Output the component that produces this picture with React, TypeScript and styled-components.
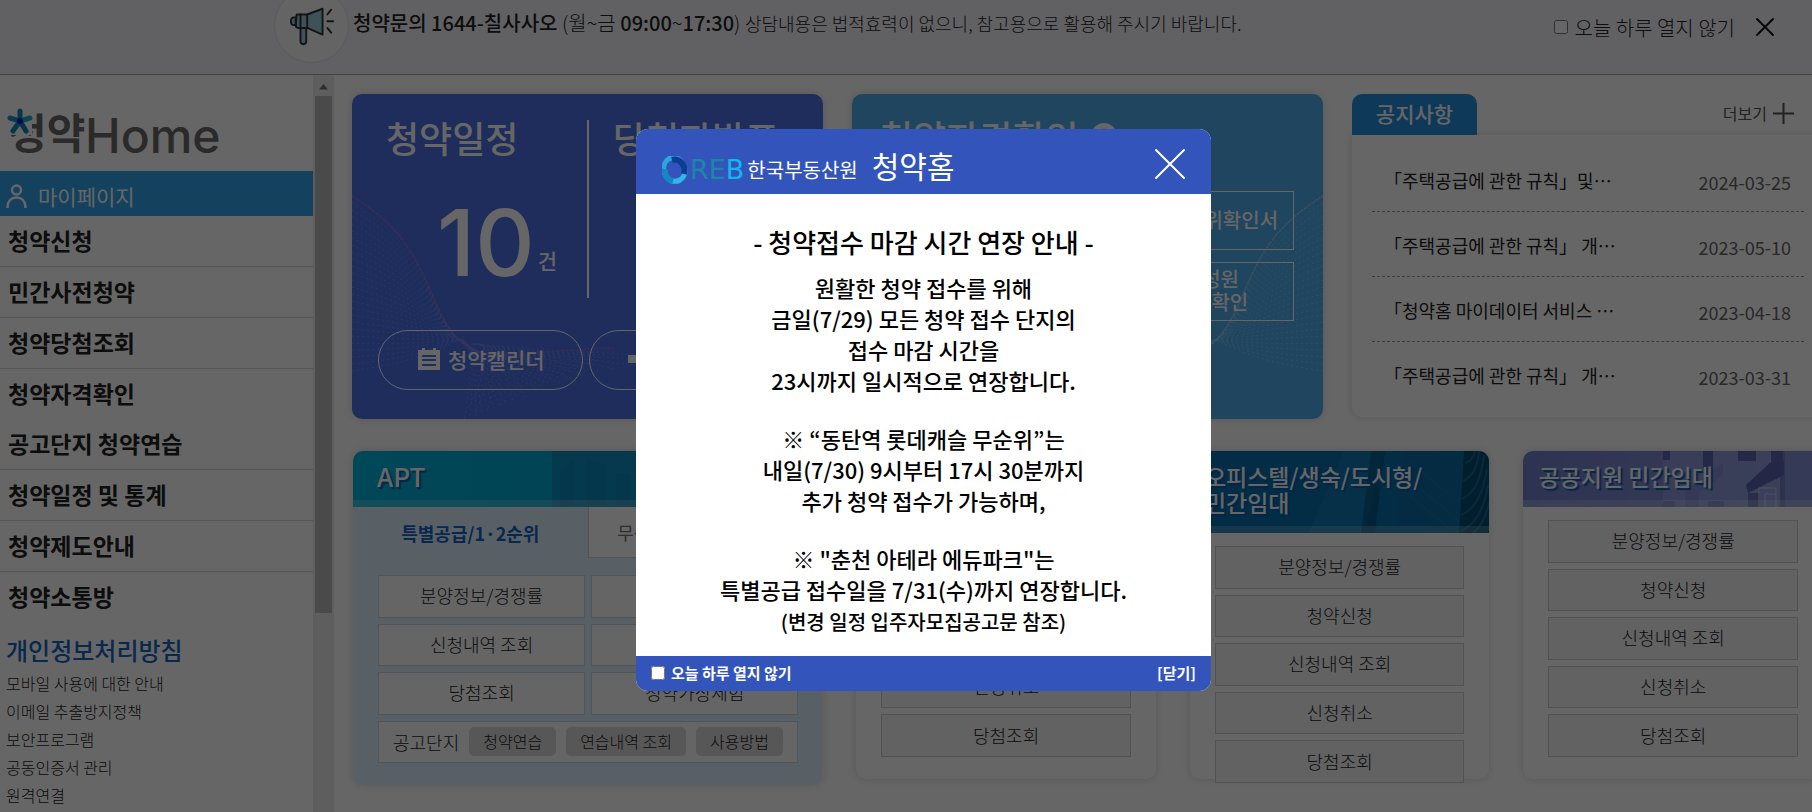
import React from "react";
import styled, { createGlobalStyle } from "styled-components";

const Global = createGlobalStyle`
  *, *::before, *::after { box-sizing: border-box; }
  body {
    margin: 0;
    background: #fff;
    color: #222;
    font-family: "Noto Sans CJK KR", "Noto Sans", sans-serif;
    font-size: 18px;
    overflow-x: hidden;
  }
  h1, h2, h3, p, ul { margin: 0; padding: 0; font-weight: inherit; font-size: inherit; }
  ul { list-style: none; }
  a { color: inherit; text-decoration: none; }
  button { font: inherit; color: inherit; background: none; border: 0; padding: 0; cursor: pointer; }
  input[type="checkbox"] { width: 14px; height: 14px; margin: 0; }
`;

const Page = styled.div`
  display: flex;
  flex-direction: column;
  min-height: 100vh;
`;

/* ---------- top notice ---------- */

const TopBar = styled.header`
  display: flex;
  align-items: flex-start;
  height: 75px;
  padding: 0 37px 0 274px;
  background: #f3f3f7;
  border-bottom: 1px solid #a8a8a8;
  overflow: hidden;
`;

const HornCircle = styled.span`
  display: flex;
  align-items: center;
  justify-content: center;
  flex: none;
  width: 75px;
  height: 75px;
  margin-top: -12px;
  border: 1px solid #e2e2e2;
  border-radius: 50%;
  background: #fafafa;
`;

const TopText = styled.p`
  flex: 1;
  margin-left: 4px;
  font-size: 20px;
  line-height: 46px;
  font-weight: 500;
  white-space: nowrap;
`;

const Light = styled.span<{ $size?: number }>`
  font-weight: 300;
  font-size: ${(p) => p.$size ?? 20}px;
`;

const TopClose = styled.div`
  display: flex;
  align-items: center;
  height: 54px;
  font-size: 20px;
  font-weight: 300;

  label { display: flex; align-items: center; gap: 7px; }
  button { display: flex; margin-left: 20px; }
`;

/* ---------- side menu ---------- */

const Columns = styled.div`
  display: flex;
  flex: 1;
`;

const Sidebar = styled.aside`
  display: flex;
  flex: none;
  width: 334px;
`;

const SideContent = styled.nav`
  flex: 1;
`;

const LogoLink = styled.a`
  display: block;
  height: 96px;
  padding: 12px 0 0 4px;

  svg { display: block; }
`;

const MyPage = styled.a`
  display: flex;
  align-items: center;
  gap: 11px;
  height: 45px;
  padding: 4px 0 0 6px;
  background: #32a4ec;
  color: #fff;
  font-size: 21px;
  line-height: 30px;
`;

const MenuItem = styled.li<{ $line: boolean }>`
  height: ${(p) => (p.$line ? 51 : 50)}px;
  padding-left: 8px;
  border-bottom: ${(p) => (p.$line ? "1px solid #d4d4d4" : "0")};
  font-size: 23px;
  font-weight: 700;
  line-height: 48px;
`;

const Privacy = styled.a`
  display: block;
  padding: 9px 0 0 6px;
  color: #1567c4;
  font-size: 24px;
  font-weight: 500;
  line-height: 38px;
`;

const SmallLinks = styled.ul`
  padding-left: 6px;
  font-size: 16px;
  line-height: 28px;
  font-weight: 300;
`;

const ScrollTrack = styled.div`
  width: 21px;
  padding: 8px 2px 0;
  background: #ececec;
`;

const ScrollThumb = styled.div`
  height: 517px;
  margin-top: 6px;
  background: #bababa;
`;

/* ---------- main ---------- */

const Main = styled.main`
  flex: 1;
  min-width: 0;
  padding: 19px 0 0 18px;
  overflow: hidden;
`;

const TopGrid = styled.div`
  display: grid;
  grid-template-columns: repeat(3, minmax(0, 1fr));
  gap: 29px;
  margin-right: -11px;
`;

const Banner = styled.section<{ $bg: string }>`
  position: relative;
  height: 325px;
  border-radius: 10px;
  background: ${(p) => p.$bg};
  color: #fff;
  box-shadow: 0 0 8px rgba(0, 0, 0, 0.15);
  overflow: hidden;
`;

const Waves = styled.svg<{ $flip?: boolean }>`
  position: absolute;
  top: 0;
  ${(p) => (p.$flip ? "right: 0; transform: scaleX(-1);" : "left: 0;")}
`;

const BannerBody = styled.div`
  position: relative;
  padding: 18px 26px 0;
`;

const Stats = styled.div`
  display: grid;
  grid-template-columns: 1fr 1fr;
  margin: 8px -3px 0 0;
`;

const Stat = styled.div<{ $divided?: boolean }>`
  height: 178px;
  padding-left: ${(p) => (p.$divided ? 8 : 24)}px;
  border-right: ${(p) => (p.$divided ? "2px solid #fff" : "0")};
`;

const BannerTitle = styled.h2`
  display: flex;
  align-items: center;
  gap: 12px;
  font-size: 36px;
  font-weight: 500;
  line-height: 34px;
  white-space: nowrap;
`;

const QualifyHead = styled.div`
  padding: 7px 0 0 2px;
`;

const StatValue = styled.p`
  display: flex;
  align-items: flex-end;
  justify-content: flex-end;
  gap: 3px;
  padding-right: 30px;
  margin-top: 33px;
  font-size: 21px;

  strong {
    font-family: Inter, sans-serif;
    font-size: 92px;
    font-weight: 500;
    line-height: 112px;
  }
  span { padding-bottom: 24px; font-weight: 500; line-height: 30px; }
`;

const Pills = styled.div`
  display: grid;
  grid-template-columns: 1fr 1fr;
  gap: 6px;
  margin: 32px 4px 0 0;
`;

const PillButton = styled.button`
  display: flex;
  align-items: center;
  justify-content: center;
  gap: 8px;
  height: 60px;
  padding: 0 0 2px 2px;
  border: 1px solid #fff;
  border-radius: 30px;
  font-size: 21px;
  font-weight: 500;
`;

const BoxGrid = styled.div`
  display: grid;
  grid-template-columns: 1fr 1fr;
  gap: 12px 9px;
  margin: 38px 3px 0;
`;

const BoxButton = styled.button`
  height: 59px;
  padding-bottom: 3px;
  border: 1px solid #fff;
  font-size: 20px;
  font-weight: 500;
  line-height: 23px;
`;

/* ---------- notices ---------- */

const NoticeHead = styled.div`
  display: flex;
  justify-content: space-between;
  height: 41px;
  padding-right: 29px;
`;

const NoticeTab = styled.h2`
  width: 125px;
  border-radius: 10px 10px 0 0;
  background: #2390dc;
  color: #fff;
  font-size: 21px;
  font-weight: 500;
  line-height: 38px;
  text-align: center;
`;

const More = styled.a`
  display: flex;
  align-items: center;
  gap: 6px;
  height: 38px;
  font-size: 16px;
  color: #555;
`;

const NoticeBox = styled.ul`
  height: 282px;
  padding: 12px 19px 0 20px;
  border-radius: 0 0 10px 10px;
  box-shadow: 0 0 8px rgba(0, 0, 0, 0.15);
`;

const NoticeRow = styled.li`
  display: flex;
  align-items: center;
  justify-content: space-between;
  height: 65px;
  padding: 1px 13px 0 12px;
  border-bottom: 1px dashed #999;
  font-size: 18px;

  &:last-child { border-bottom-color: transparent; }
  time { padding-top: 4px; color: #666; }
`;

/* ---------- product cards ---------- */

const CardGrid = styled.div`
  display: grid;
  grid-template-columns: 470fr 300fr 300fr 300fr;
  gap: 34px;
  align-items: start;
  margin: 32px -11px 0 1px;
`;

const Card = styled.section<{ $tall?: boolean }>`
  height: ${(p) => (p.$tall ? 334 : 328)}px;
  border-radius: 10px;
  background: ${(p) => (p.$tall ? "#dff0fd" : "#fff")};
  box-shadow: 0 0 8px rgba(0, 0, 0, 0.15);
`;

const CardHead = styled.div<{ $bg: string; $large?: boolean }>`
  position: relative;
  padding: 12px ${(p) => (p.$large ? 24 : 15)}px 18px;
  border-radius: 10px 10px 0 0;
  background: ${(p) => p.$bg};
  color: #fff;
  font-size: ${(p) => (p.$large ? 26 : 23)}px;
  font-weight: 500;
  line-height: 26px;
  text-shadow: 2px 2px 1px #0a5cae;
  overflow: hidden;

  &::after {
    content: "";
    position: absolute;
    left: 0;
    right: 0;
    bottom: 0;
    height: 7px;
    background: rgba(255, 255, 255, 0.2);
  }
  h2 { position: relative; white-space: pre-line; }
`;

const HeadArt = styled.svg`
  position: absolute;
  right: 0;
  top: 0;
  height: 100%;
`;

const Tabs = styled.div`
  display: grid;
  grid-template-columns: 1fr 1fr;
  height: 50px;
`;

const Tab = styled.button<{ $on?: boolean }>`
  background: ${(p) => (p.$on ? "transparent" : "#fff")};
  color: ${(p) => (p.$on ? "#1863bd" : "#777")};
  font-size: 18px;
  font-weight: ${(p) => (p.$on ? 700 : 400)};
  line-height: 50px;
  border-left: ${(p) => (p.$on ? "0" : "1px solid #c5d5e2")};
  border-bottom: ${(p) => (p.$on ? "0" : "1px solid #c5d5e2")};
`;

const AptGrid = styled.div`
  display: grid;
  grid-template-columns: 1fr 1fr;
  grid-template-rows: repeat(4, 1fr);
  gap: 6px;
  height: 188px;
  margin: 18px 24px 0 25px;
`;

const ListGrid = styled.div`
  display: grid;
  grid-template-rows: repeat(5, 1fr);
  gap: 6px;
  height: 237px;
  margin: 13px 25px 0;
`;

const Item = styled.button<{ $plain?: boolean }>`
  padding-bottom: 2px;
  border: 1px solid ${(p) => (p.$plain ? "#bdd6e6" : "#cdcdd2")};
  background: ${(p) => (p.$plain ? "#fcfcfc" : "#f4f4f7")};
  font-size: 18px;
  font-weight: 300;
`;

const Practice = styled.div`
  display: flex;
  align-items: center;
  grid-column: 1 / -1;
  gap: 10px;
  padding-left: 14px;
  border: 1px solid #bdd6e6;
  background: #fcfcfc;
  font-size: 18px;
  font-weight: 300;
  white-space: nowrap;
`;

const Chip = styled.button`
  height: 29px;
  padding: 0 14px;
  border-radius: 5px;
  background: #d9d9da;
  font-size: 16px;
  line-height: 29px;
  font-weight: 300;
`;

/* ---------- popup ---------- */

const Shade = styled.div`
  position: fixed;
  inset: 0;
  display: flex;
  align-items: flex-start;
  justify-content: center;
  padding: 129px 0 0 35px;
  background: rgba(0, 0, 0, 0.6);
`;

const Dialog = styled.div`
  width: 575px;
  border-radius: 12px;
  background: #fff;
  color: #000;
  overflow: hidden;
`;

const DialogHead = styled.div`
  display: flex;
  align-items: center;
  height: 65px;
  padding: 16px 25px 0 26px;
  background: #3355bb;
  color: #fff;
`;

const Reb = styled.span`
  margin: 0 3px 0 2px;
  font-family: "DejaVu Sans", sans-serif;
  font-size: 27px;
  line-height: 30px;
  color: #1c86a8;

  b { color: #10b8ee; font-weight: 400; }
`;

const Agency = styled.span`
  font-size: 20px;
  line-height: 30px;
`;

const DialogTitle = styled.h1`
  flex: 1;
  margin-left: 14px;
  font-size: 30px;
  line-height: 30px;
  padding-bottom: 9px;
`;

const CloseButton = styled.button`
  display: flex;
  margin-top: -12px;
`;

const DialogBody = styled.div`
  height: 462px;
  padding-top: 28px;
  text-align: center;
  font-size: 22px;
  font-weight: 500;
  line-height: 31px;

  h2 { margin-bottom: 10px; font-size: 26px; line-height: 40px; }
  p + p { margin-top: 27px; }
  small { display: block; font-size: 20px; line-height: 34px; }
`;

const DialogFoot = styled.div`
  display: flex;
  align-items: center;
  justify-content: space-between;
  height: 35px;
  padding: 0 15px 2px;
  background: #3355bb;
  color: #fff;
  font-size: 15px;
  font-weight: 700;

  label { display: flex; align-items: center; gap: 6px; }
`;

/* ---------- data ---------- */

const MENU = [
  "청약신청",
  "민간사전청약",
  "청약당첨조회",
  "청약자격확인",
  "공고단지 청약연습",
  "청약일정 및 통계",
  "청약제도안내",
  "청약소통방",
];
const NO_LINE = ["청약자격확인", "청약소통방"];
const LINKS = ["모바일 사용에 대한 안내", "이메일 추출방지정책", "보안프로그램", "공동인증서 관리", "원격연결"];
const NOTICES = [
  ["「주택공급에 관한 규칙」및…", "2024-03-25"],
  ["「주택공급에 관한 규칙」 개…", "2023-05-10"],
  ["「청약홈 마이데이터 서비스 …", "2023-04-18"],
  ["「주택공급에 관한 규칙」 개…", "2023-03-31"],
];
const SERVICES = ["분양정보/경쟁률", "청약신청", "신청내역 조회", "신청취소", "당첨조회"];
const APT_ITEMS = ["분양정보/경쟁률", "청약신청", "신청내역 조회", "신청취소", "당첨조회", "청약가상체험"];

/* ---------- drawings ---------- */

function WaveLines({ color, accent, flip }: { color: string; accent: string; flip?: boolean }) {
  const lines = Array.from({ length: 26 }, (_, i) => {
    const t = i / 25;
    const sy = 102 + t * 175;
    return `M0 ${sy} C ${70 - t * 20} ${145 + t * 125} ${70 + t * 10} ${190 + t * 70} ${96 + t * 6} ${232 + t * 16} S ${150 - t * 30} ${258 + t * 20} ${262 - t * 150} ${258 + t * 70}`;
  });
  const fan = Array.from({ length: 16 }, (_, i) => {
    const t = i / 15;
    return `M${120 + t * 10} 250 Q ${200 - t * 60} ${256 + t * 20} ${300 - t * 190} ${262 + t * 63}`;
  });
  return (
    <Waves $flip={flip} width="471" height="325" viewBox="0 0 471 325" fill="none" aria-hidden="true">
      <g stroke={color} strokeWidth="1" strokeDasharray="2 3" opacity="0.6">
        {lines.map((d, i) => <path key={i} d={d} />)}
        {fan.map((d, i) => <path key={i} d={d} />)}
      </g>
      <path d="M0 102 C70 145 70 190 96 232 S150 258 262 254" stroke={accent} strokeWidth="2" strokeDasharray="2 1" opacity="0.5" />
    </Waves>
  );
}

function HomeLogo() {
  return (
    <svg width="240" height="76" viewBox="0 0 240 76" role="img" aria-label="청약Home">
      <text x="4" y="62" fontFamily="Noto Sans CJK KR, sans-serif" fontSize="42" fontWeight="700" fill="#6a6a6a">청약</text>
      <text x="81" y="66" fontFamily="Inter, sans-serif" fontSize="48" fontWeight="500" fill="#6a6a6a">Home</text>
      <path d="M0 18H28V48H0z" fill="#fff" />
      <g strokeWidth="5" strokeLinecap="round">
        <path d="M16 34V24" stroke="#1a8ab5" />
        <path d="M16 34L6 31" stroke="#1f93c4" />
        <path d="M16 34L26 31" stroke="#12b4cf" />
        <path d="M16 34L9 44" stroke="#168ac0" />
        <path d="M16 34L22 44" stroke="#1a7fb5" />
      </g>
      <circle cx="16" cy="34" r="3" fill="#0a1fd0" />
    </svg>
  );
}

function Horn() {
  return (
    <svg width="46" height="46" viewBox="0 0 48 48" fill="#9dcbde" stroke="#333" strokeWidth="2" strokeLinejoin="round" strokeLinecap="round" aria-hidden="true">
      <path d="M12 26h6v14q0 3-3 3t-3-3z" />
      <path d="M8 12h11l16-6v27l-16-7H10q-3 0-3-3z" />
      <path d="M19 12v14M12 12v14" />
      <path d="M7 15H5q-3 0-3 4t3 4h2z" />
      <path d="M40 12l4-5M40 19h6M40 26l4 5" fill="none" />
    </svg>
  );
}

function Cross({ size, color, width }: { size: number; color: string; width: number }) {
  return (
    <svg width={size} height={size} viewBox={`0 0 ${size} ${size}`} stroke={color} strokeWidth={width} strokeLinecap="round" aria-hidden="true">
      <path d={`M2 2L${size - 2} ${size - 2}M${size - 2} 2L2 ${size - 2}`} />
    </svg>
  );
}

function CalendarIcon() {
  return (
    <svg width="22" height="22" viewBox="0 0 22 22" aria-hidden="true">
      <path fill="#fff" fillRule="evenodd" d="M0 2h4V0h3v2h8V0h3v2h4v20H0zM4 7v2h14V7zm0 4v2h14v-2zm0 5v2h14v-2z" />
    </svg>
  );
}

function ServiceCard({ title, bg, art }: { title: string; bg: string; art?: React.ReactNode }) {
  return (
    <Card>
      <CardHead $bg={bg}>
        {art}
        <h2>{title}</h2>
      </CardHead>
      <ListGrid>
        {SERVICES.map((s) => <Item key={s}>{s}</Item>)}
      </ListGrid>
    </Card>
  );
}

const towerArt = (
  <HeadArt width="180" viewBox="0 0 180 82" preserveAspectRatio="none" aria-hidden="true">
    <path d="M0 82L35 0h40L55 82z" fill="#1689c4" opacity=".35" />
    <path d="M62 0h14L66 82H52z" fill="#033b68" opacity=".4" />
    <path d="M95 0h58l-8 82H88z" fill="#0e6aa3" opacity=".5" />
    <path d="M90 20l60 50M88 35l56 45M100 10l50 42" stroke="#38a5d8" opacity=".2" />
    <path d="M155 0h25v82h-30z" fill="#033357" opacity=".6" />
    <path d="M156 12q8-2 10-12M154 30q14-6 16-30M153 48q18-8 22-44M152 64q20-8 26-46M151 80q22-8 28-46M164 82q12-10 16-30" fill="none" stroke="#4aa3cc" strokeWidth="2" opacity=".3" />
  </HeadArt>
);

const houseArt = (
  <HeadArt width="190" viewBox="0 0 190 56" preserveAspectRatio="none" aria-hidden="true">
    <path d="M30 56V0h122v56z" fill="#a9b4ea" opacity=".35" />
    <path d="M30 0h7v9h-7zM70 0h10v18H70zM105 0h18v10h-18zM138 0h12v10h-12z" fill="#5c66b4" />
    <path d="M52 56V40L90 12v12L66 42v14z" fill="#7f8bd0" opacity=".7" />
    <path d="M113 34l26-24h12v14l-36 18z" fill="#5e63b0" />
    <path d="M115 42h12v14h-12z" fill="#6a6fba" />
    <path d="M126 56V37h17v19M132 56V43h11" fill="none" stroke="#c2caf2" strokeWidth="1" />
    <path d="M30 50h12v6H30zM75 50h16v6H75z" fill="#6973bb" opacity=".7" />
    <path d="M147 0h5v56h-5z" fill="#5c66b4" opacity=".6" />
    <path d="M152 0h38v56h-38z" fill="#8591d8" />
  </HeadArt>
);

const cityArt = (
  <HeadArt width="270" viewBox="0 0 270 56" preserveAspectRatio="none" aria-hidden="true">
    <path d="M0 0h270v56H0z" fill="#1280b8" opacity=".6" />
    <path d="M8 56V18l14-8v46M34 56V8l20 6v42M64 56V22h14v34" fill="#0d6ca8" opacity=".15" />
  </HeadArt>
);

export default function App() {
  return (
    <>
      <Global />
      <Page>
        <TopBar>
          <HornCircle><Horn /></HornCircle>
          <TopText>
            청약문의 1644-칠사사오 <Light>(월~금</Light> 09:00<Light>~</Light>17:30<Light>)</Light>{" "}
            <Light $size={18}>상담내용은 법적효력이 없으니, 참고용으로 활용해 주시기 바랍니다.</Light>
          </TopText>
          <TopClose>
            <label><input type="checkbox" />오늘 하루 열지 않기</label>
            <button aria-label="닫기"><Cross size={20} color="#111" width={2} /></button>
          </TopClose>
        </TopBar>

        <Columns>
          <Sidebar>
            <SideContent>
              <LogoLink href="#"><HomeLogo /></LogoLink>
              <MyPage href="#">
                <svg width="21" height="24" viewBox="0 0 21 24" fill="none" stroke="#fff" strokeWidth="2.500" aria-hidden="true">
                  <circle cx="10.500" cy="6" r="4.500" />
                  <path d="M1.500 24c0-7 4-10.500 9-10.500s9 3.500 9 10.500" />
                </svg>
                마이페이지
              </MyPage>
              <ul>
                {MENU.map((m) => (
                  <MenuItem key={m} $line={!NO_LINE.includes(m)}><a href="#">{m}</a></MenuItem>
                ))}
              </ul>
              <Privacy href="#">개인정보처리방침</Privacy>
              <SmallLinks>
                {LINKS.map((l) => <li key={l}><a href="#">{l}</a></li>)}
              </SmallLinks>
            </SideContent>
            <ScrollTrack>
              <svg width="17" height="7" viewBox="0 0 17 7" display="block" aria-hidden="true">
                <path d="M4 6.500L8.500 1 13 6.500z" fill="#777" />
              </svg>
              <ScrollThumb />
            </ScrollTrack>
          </Sidebar>

          <Main>
            <TopGrid>
              <Banner $bg="#4b70e6">
                <WaveLines color="#7f9aff" accent="#c070c8" />
                <BannerBody>
                  <Stats>
                    <Stat $divided>
                      <BannerTitle>청약일정</BannerTitle>
                      <StatValue><strong>10</strong><span>건</span></StatValue>
                    </Stat>
                    <Stat>
                      <BannerTitle>당첨자발표</BannerTitle>
                    </Stat>
                  </Stats>
                  <Pills>
                    <PillButton><CalendarIcon />청약캘린더</PillButton>
                    <PillButton>
                      <svg width="22" height="22" viewBox="0 0 22 22" fill="#fff" aria-hidden="true"><path d="M0 7h8V0h7v7h7v8h-7v7H8v-7H0z" /></svg>
                      당첨자발표
                    </PillButton>
                  </Pills>
                </BannerBody>
              </Banner>

              <Banner $bg="#50acec">
                <WaveLines flip color="#93d0ff" accent="#b8dcf2" />
                <BannerBody>
                  <QualifyHead>
                    <BannerTitle>
                      청약자격확인
                      <svg width="26" height="26" viewBox="0 0 26 26" aria-hidden="true">
                        <circle cx="13" cy="13" r="13" fill="#fff" />
                        <path d="M9 11q0-4 4-4t4 4q0 2-4 4v2M13 18v3" fill="none" stroke="#50acec" strokeWidth="2.500" />
                      </svg>
                    </BannerTitle>
                  </QualifyHead>
                  <BoxGrid>
                    <BoxButton>청약자격확인</BoxButton>
                    <BoxButton>청약통장 순위확인서</BoxButton>
                    <BoxButton>청약제한사항</BoxButton>
                    <BoxButton>세대구성원<br />등록조회확인</BoxButton>
                  </BoxGrid>
                </BannerBody>
              </Banner>

              <section>
                <NoticeHead>
                  <NoticeTab>공지사항</NoticeTab>
                  <More href="#">
                    더보기
                    <svg width="21" height="21" viewBox="0 0 21 21" stroke="#555" strokeWidth="2" aria-hidden="true"><path d="M10.500 0v21M0 10.500h21" /></svg>
                  </More>
                </NoticeHead>
                <NoticeBox>
                  {NOTICES.map(([title, date]) => (
                    <NoticeRow key={date}><a href="#">{title}</a><time>{date}</time></NoticeRow>
                  ))}
                </NoticeBox>
              </section>
            </TopGrid>

            <CardGrid>
              <Card $tall>
                <CardHead $large $bg="linear-gradient(90deg, #00b2dc, #009fce)">
                  {cityArt}
                  <h2>APT</h2>
                </CardHead>
                <Tabs>
                  <Tab $on>특별공급/1·2순위</Tab>
                  <Tab>무순위/잔여세대 재공급</Tab>
                </Tabs>
                <AptGrid>
                  {APT_ITEMS.map((s) => <Item key={s} $plain>{s}</Item>)}
                  <Practice>
                    공고단지
                    <Chip>청약연습</Chip>
                    <Chip>연습내역 조회</Chip>
                    <Chip>사용방법</Chip>
                  </Practice>
                </AptGrid>
              </Card>
              <ServiceCard title="민간사전청약" bg="#2a8fd0" />
              <ServiceCard title={"오피스텔/생숙/도시형/\n민간임대"} bg="linear-gradient(90deg, #0a6eb0, #0672a8)" art={towerArt} />
              <ServiceCard title="공공지원 민간임대" bg="linear-gradient(90deg, #7480cc, #8c98dc)" art={houseArt} />
            </CardGrid>
          </Main>
        </Columns>
      </Page>

      <Shade>
        <Dialog role="dialog" aria-modal="true" aria-label="청약홈">
          <DialogHead>
            <svg width="26" height="28" viewBox="0 0 26 28" fill="none" aria-hidden="true">
              <path d="M19 5A10 11 0 0 0 3 18" stroke="#2aa6dc" strokeWidth="5" />
              <path d="M3 13A10 11 0 0 0 18 24" stroke="#1587c8" strokeWidth="6" />
              <path d="M11 25A10 11 0 0 0 23 12" stroke="#34b6e8" strokeWidth="5" />
              <path d="M22 18A10 11 0 0 0 10 4" stroke="#0c3f92" strokeWidth="6" />
            </svg>
            <Reb>RE<b>B</b></Reb>
            <Agency>한국부동산원</Agency>
            <DialogTitle>청약홈</DialogTitle>
            <CloseButton aria-label="닫기"><Cross size={32} color="#fff" width={2} /></CloseButton>
          </DialogHead>
          <DialogBody>
            <h2>- 청약접수 마감 시간 연장 안내 -</h2>
            <p>
              원활한 청약 접수를 위해<br />
              금일(7/29) 모든 청약 접수 단지의<br />
              접수 마감 시간을<br />
              23시까지 일시적으로 연장합니다.
            </p>
            <p>
              ※ “동탄역 롯데캐슬 무순위”는<br />
              내일(7/30) 9시부터 17시 30분까지<br />
              추가 청약 접수가 가능하며,
            </p>
            <p>
              ※ "춘천 아테라 에듀파크"는<br />
              특별공급 접수일을 7/31(수)까지 연장합니다.
              <small>(변경 일정 입주자모집공고문 참조)</small>
            </p>
          </DialogBody>
          <DialogFoot>
            <label><input type="checkbox" />오늘 하루 열지 않기</label>
            <button>[닫기]</button>
          </DialogFoot>
        </Dialog>
      </Shade>
    </>
  );
}
